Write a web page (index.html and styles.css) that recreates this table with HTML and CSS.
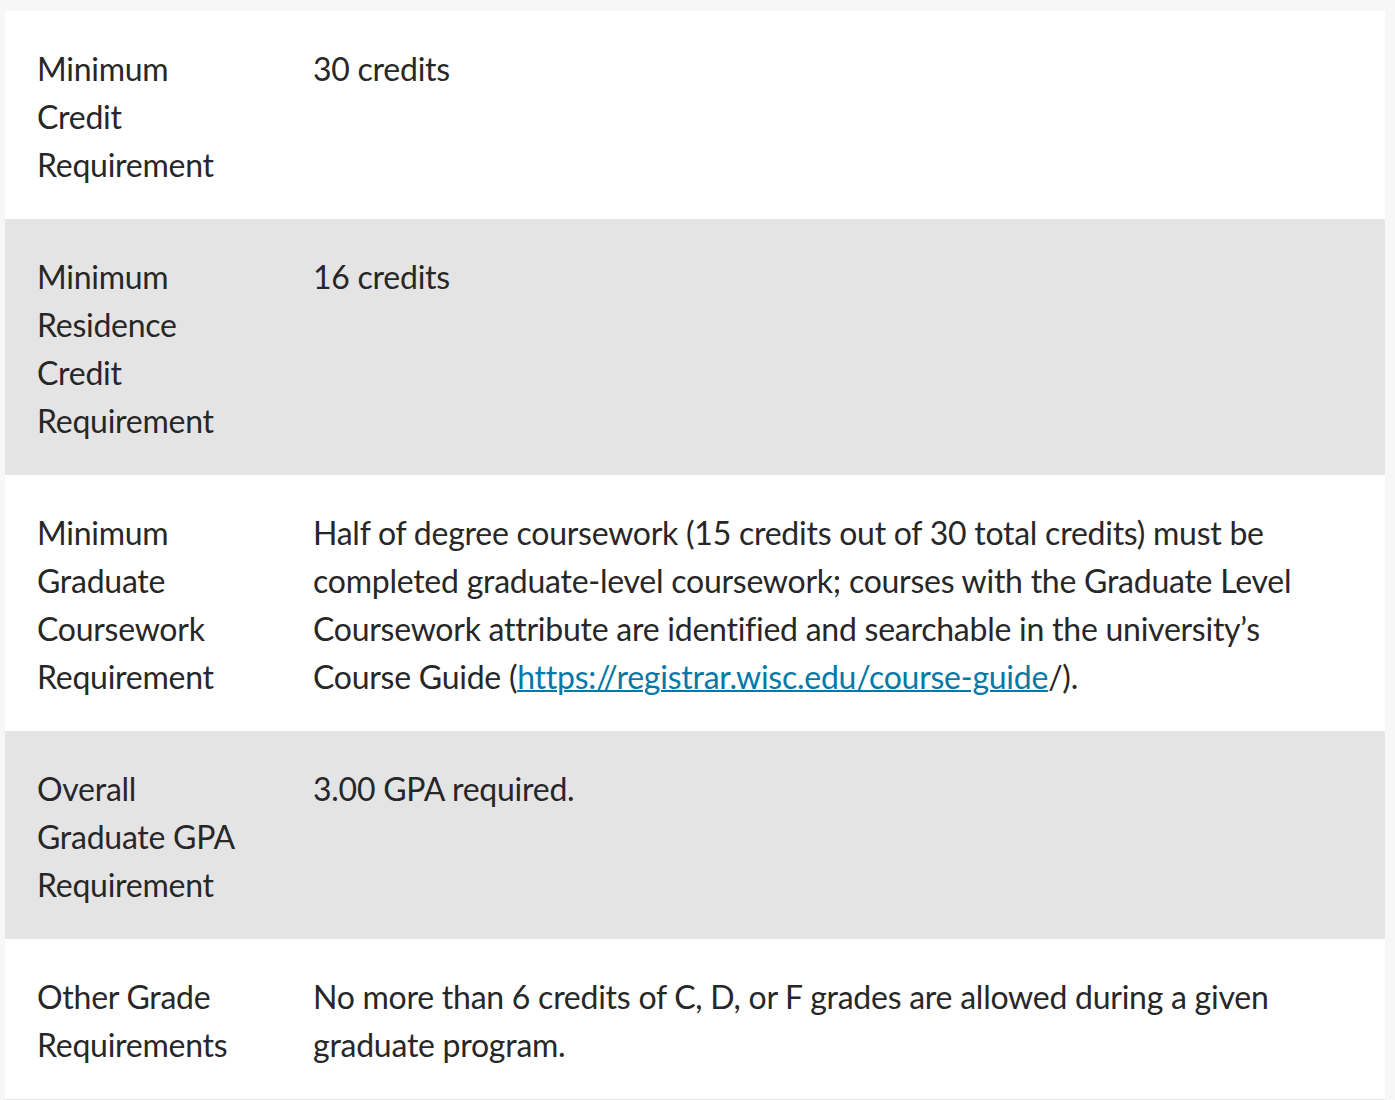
FILE: index.html
```html
<!DOCTYPE html>
<html lang="en">
<head>
<meta charset="utf-8">
<title>Requirements</title>
<link rel="stylesheet" href="styles.css">
</head>
<body>
<table class="req-table">
  <tbody>
    <tr class="row">
      <td class="label">Minimum Credit Requirement</td>
      <td class="value">30 credits</td>
    </tr>
    <tr class="row alt">
      <td class="label">Minimum Residence Credit Requirement</td>
      <td class="value">16 credits</td>
    </tr>
    <tr class="row">
      <td class="label">Minimum Graduate Coursework Requirement</td>
      <td class="value">Half of degree coursework (15 credits out of 30 total credits) must be completed graduate-level coursework; courses with the Graduate Level Coursework attribute are identified and searchable in the university’s Course Guide (<a class="link" href="#">https://registrar.wisc.edu/course-guide</a>/).</td>
    </tr>
    <tr class="row alt">
      <td class="label">Overall Graduate GPA Requirement</td>
      <td class="value">3.00 GPA required.</td>
    </tr>
    <tr class="row">
      <td class="label">Other Grade Requirements</td>
      <td class="value">No more than 6 credits of C, D, or F grades are allowed during a given graduate program.</td>
    </tr>
  </tbody>
</table>
</body>
</html>
```

FILE: styles.css
```css
html, body {
  margin: 0;
  padding: 0;
  background: #f7f7f7;
}
body {
  padding: 11px 10px 0 5px;
  font-family: Lato, "Open Sans", sans-serif;
  color: #282728;
}
.req-table {
  width: 1380px;
  border-collapse: collapse;
  table-layout: fixed;
  background: #ffffff;
  border-bottom: 1px solid #e4e4e4;
}
.row td {
  vertical-align: top;
  padding: 34px 33px 30px 33px;
  font-size: 32px;
  line-height: 48px;
  letter-spacing: -0.25px;
}
.row .label {
  width: 210px;
  padding-left: 32px;
}
.row .value {
  padding-left: 33px;
}
.row.alt {
  background: #e4e4e4;
}
.link {
  color: #0479a8;
  text-decoration: underline;
  text-decoration-thickness: 2px;
}
```
